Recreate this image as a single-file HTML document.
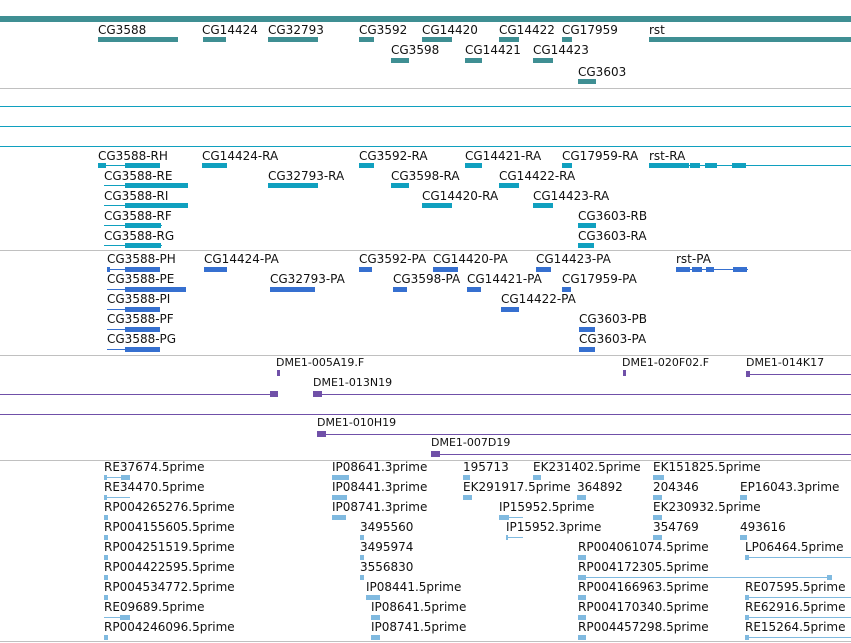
<!DOCTYPE html><html><head><style>
body{margin:0;width:851px;height:643px;background:#fff;position:relative;overflow:hidden;font-family:"DejaVu Sans","Liberation Sans",sans-serif;font-size:12px;color:#111}
.l{position:absolute;white-space:nowrap;line-height:14px}
.c{font-size:11px}
.b{position:absolute}
.h{position:absolute;left:0;width:851px;height:1px}
.t{background:#3f8f93}.r{background:#10a0bf}.p{background:#3670d0}.e{background:#80bae0}.d{background:#7050a8}
</style></head><body>
<div class="b t" style="left:0;top:16px;width:851px;height:6px"></div>
<div class="l" style="left:98px;top:23px">CG3588</div><div class="b t" style="left:98px;top:37px;width:80px;height:5px"></div>
<div class="l" style="left:202px;top:23px">CG14424</div><div class="b t" style="left:203px;top:37px;width:23px;height:5px"></div>
<div class="l" style="left:268px;top:23px">CG32793</div><div class="b t" style="left:268px;top:37px;width:50px;height:5px"></div>
<div class="l" style="left:359px;top:23px">CG3592</div><div class="b t" style="left:359px;top:37px;width:15px;height:5px"></div>
<div class="l" style="left:422px;top:23px">CG14420</div><div class="b t" style="left:422px;top:37px;width:30px;height:5px"></div>
<div class="l" style="left:499px;top:23px">CG14422</div><div class="b t" style="left:499px;top:37px;width:20px;height:5px"></div>
<div class="l" style="left:562px;top:23px">CG17959</div><div class="b t" style="left:562px;top:37px;width:10px;height:5px"></div>
<div class="l" style="left:649px;top:23px">rst</div><div class="b t" style="left:649px;top:37px;width:202px;height:5px"></div>
<div class="l" style="left:391px;top:43px">CG3598</div><div class="b t" style="left:391px;top:58px;width:18px;height:5px"></div>
<div class="l" style="left:465px;top:43px">CG14421</div><div class="b t" style="left:465px;top:58px;width:17px;height:5px"></div>
<div class="l" style="left:533px;top:43px">CG14423</div><div class="b t" style="left:533px;top:58px;width:20px;height:5px"></div>
<div class="l" style="left:578px;top:65px">CG3603</div><div class="b t" style="left:578px;top:79px;width:18px;height:5px"></div>
<div class="h" style="top:88px;background:#c0c0c0"></div>
<div class="h r" style="top:106px"></div><div class="h r" style="top:126px"></div><div class="h r" style="top:146px"></div>
<!-- transcripts -->
<div class="l" style="left:98px;top:149px">CG3588-RH</div><div class="b r" style="left:98px;top:165px;width:62px;height:1px"></div><div class="b r" style="left:98px;top:163px;width:8px;height:5px"></div><div class="b r" style="left:125px;top:163px;width:35px;height:5px"></div>
<div class="l" style="left:104px;top:169px">CG3588-RE</div><div class="b r" style="left:104px;top:185px;width:84px;height:1px"></div><div class="b r" style="left:125px;top:183px;width:63px;height:5px"></div>
<div class="l" style="left:104px;top:189px">CG3588-RI</div><div class="b r" style="left:104px;top:205px;width:84px;height:1px"></div><div class="b r" style="left:125px;top:203px;width:63px;height:5px"></div>
<div class="l" style="left:104px;top:209px">CG3588-RF</div><div class="b r" style="left:104px;top:225px;width:58px;height:1px"></div><div class="b r" style="left:125px;top:223px;width:36px;height:5px"></div>
<div class="l" style="left:104px;top:229px">CG3588-RG</div><div class="b r" style="left:104px;top:245px;width:58px;height:1px"></div><div class="b r" style="left:125px;top:243px;width:36px;height:5px"></div>
<div class="l" style="left:202px;top:149px">CG14424-RA</div><div class="b r" style="left:202px;top:163px;width:25px;height:5px"></div>
<div class="l" style="left:268px;top:169px">CG32793-RA</div><div class="b r" style="left:268px;top:183px;width:50px;height:5px"></div>
<div class="l" style="left:359px;top:149px">CG3592-RA</div><div class="b r" style="left:359px;top:163px;width:15px;height:5px"></div>
<div class="l" style="left:391px;top:169px">CG3598-RA</div><div class="b r" style="left:391px;top:183px;width:18px;height:5px"></div>
<div class="l" style="left:422px;top:189px">CG14420-RA</div><div class="b r" style="left:422px;top:203px;width:30px;height:5px"></div>
<div class="l" style="left:465px;top:149px">CG14421-RA</div><div class="b r" style="left:465px;top:163px;width:17px;height:5px"></div>
<div class="l" style="left:499px;top:169px">CG14422-RA</div><div class="b r" style="left:499px;top:183px;width:20px;height:5px"></div>
<div class="l" style="left:533px;top:189px">CG14423-RA</div><div class="b r" style="left:533px;top:203px;width:20px;height:5px"></div>
<div class="l" style="left:562px;top:149px">CG17959-RA</div><div class="b r" style="left:562px;top:163px;width:10px;height:5px"></div>
<div class="l" style="left:649px;top:149px">rst-RA</div><div class="b r" style="left:649px;top:165px;width:202px;height:1px"></div><div class="b r" style="left:649px;top:163px;width:40px;height:5px"></div><div class="b r" style="left:690px;top:163px;width:10px;height:5px"></div><div class="b r" style="left:705px;top:163px;width:12px;height:5px"></div><div class="b r" style="left:732px;top:163px;width:14px;height:5px"></div>
<div class="l" style="left:578px;top:209px">CG3603-RB</div><div class="b r" style="left:578px;top:223px;width:18px;height:5px"></div>
<div class="l" style="left:578px;top:229px">CG3603-RA</div><div class="b r" style="left:578px;top:243px;width:16px;height:5px"></div>
<div class="h" style="top:250px;background:#c0c0c0"></div>
<!-- proteins -->
<div class="l" style="left:107px;top:252px">CG3588-PH</div><div class="b p" style="left:107px;top:269px;width:53px;height:1px"></div><div class="b p" style="left:125px;top:267px;width:35px;height:5px"></div><div class="b p" style="left:107px;top:267px;width:3px;height:5px"></div>
<div class="l" style="left:107px;top:272px">CG3588-PE</div><div class="b p" style="left:107px;top:289px;width:79px;height:1px"></div><div class="b p" style="left:125px;top:287px;width:61px;height:5px"></div>
<div class="l" style="left:107px;top:292px">CG3588-PI</div><div class="b p" style="left:107px;top:309px;width:53px;height:1px"></div><div class="b p" style="left:125px;top:307px;width:35px;height:5px"></div>
<div class="l" style="left:107px;top:312px">CG3588-PF</div><div class="b p" style="left:107px;top:329px;width:53px;height:1px"></div><div class="b p" style="left:125px;top:327px;width:35px;height:5px"></div>
<div class="l" style="left:107px;top:332px">CG3588-PG</div><div class="b p" style="left:107px;top:349px;width:53px;height:1px"></div><div class="b p" style="left:125px;top:347px;width:35px;height:5px"></div>
<div class="l" style="left:204px;top:252px">CG14424-PA</div><div class="b p" style="left:204px;top:267px;width:23px;height:5px"></div>
<div class="l" style="left:270px;top:272px">CG32793-PA</div><div class="b p" style="left:270px;top:287px;width:45px;height:5px"></div>
<div class="l" style="left:359px;top:252px">CG3592-PA</div><div class="b p" style="left:359px;top:267px;width:13px;height:5px"></div>
<div class="l" style="left:433px;top:252px">CG14420-PA</div><div class="b p" style="left:433px;top:267px;width:25px;height:5px"></div>
<div class="l" style="left:536px;top:252px">CG14423-PA</div><div class="b p" style="left:536px;top:267px;width:15px;height:5px"></div>
<div class="l" style="left:393px;top:272px">CG3598-PA</div><div class="b p" style="left:393px;top:287px;width:14px;height:5px"></div>
<div class="l" style="left:467px;top:272px">CG14421-PA</div><div class="b p" style="left:467px;top:287px;width:14px;height:5px"></div>
<div class="l" style="left:562px;top:272px">CG17959-PA</div><div class="b p" style="left:562px;top:287px;width:9px;height:5px"></div>
<div class="l" style="left:501px;top:292px">CG14422-PA</div><div class="b p" style="left:501px;top:307px;width:18px;height:5px"></div>
<div class="l" style="left:676px;top:252px">rst-PA</div><div class="b p" style="left:676px;top:269px;width:72px;height:1px"></div><div class="b p" style="left:676px;top:267px;width:14px;height:5px"></div><div class="b p" style="left:692px;top:267px;width:10px;height:5px"></div><div class="b p" style="left:706px;top:267px;width:8px;height:5px"></div><div class="b p" style="left:733px;top:267px;width:14px;height:5px"></div>
<div class="l" style="left:579px;top:312px">CG3603-PB</div><div class="b p" style="left:579px;top:327px;width:16px;height:5px"></div>
<div class="l" style="left:579px;top:332px">CG3603-PA</div><div class="b p" style="left:579px;top:347px;width:16px;height:5px"></div>
<div class="h" style="top:355px;background:#c0c0c0"></div>
<!-- clones -->
<div class="l c" style="left:276px;top:356px">DME1-005A19.F</div><div class="b d" style="left:277px;top:370px;width:3px;height:6px"></div>
<div class="l c" style="left:622px;top:356px">DME1-020F02.F</div><div class="b d" style="left:623px;top:370px;width:3px;height:6px"></div>
<div class="l c" style="left:746px;top:356px">DME1-014K17</div><div class="b d" style="left:746px;top:374px;width:105px;height:1px"></div><div class="b d" style="left:746px;top:371px;width:4px;height:6px"></div>
<div class="l c" style="left:313px;top:376px">DME1-013N19</div>
<div class="b d" style="left:0;top:394px;width:278px;height:1px"></div><div class="b d" style="left:270px;top:391px;width:8px;height:6px"></div>
<div class="b d" style="left:313px;top:394px;width:538px;height:1px"></div><div class="b d" style="left:313px;top:391px;width:9px;height:6px"></div>
<div class="b d" style="left:0;top:414px;width:851px;height:1px"></div>
<div class="l c" style="left:317px;top:416px">DME1-010H19</div><div class="b d" style="left:317px;top:434px;width:534px;height:1px"></div><div class="b d" style="left:317px;top:431px;width:9px;height:6px"></div>
<div class="l c" style="left:431px;top:436px">DME1-007D19</div><div class="b d" style="left:431px;top:454px;width:420px;height:1px"></div><div class="b d" style="left:431px;top:451px;width:9px;height:6px"></div>
<div class="h" style="top:460px;background:#c0c0c0"></div>
<!-- ESTs -->
<div class="l" style="left:104px;top:460px">RE37674.5prime</div><div class="b e" style="left:104px;top:477px;width:26px;height:1px"></div><div class="b e" style="left:121px;top:475px;width:9px;height:5px"></div><div class="b e" style="left:104px;top:475px;width:3px;height:5px"></div>
<div class="l" style="left:104px;top:480px">RE34470.5prime</div><div class="b e" style="left:104px;top:497px;width:26px;height:1px"></div><div class="b e" style="left:104px;top:495px;width:3px;height:5px"></div>
<div class="l" style="left:104px;top:500px">RP004265276.5prime</div><div class="b e" style="left:104px;top:515px;width:4px;height:5px"></div>
<div class="l" style="left:104px;top:520px">RP004155605.5prime</div><div class="b e" style="left:104px;top:535px;width:4px;height:5px"></div>
<div class="l" style="left:104px;top:540px">RP004251519.5prime</div><div class="b e" style="left:104px;top:555px;width:4px;height:5px"></div>
<div class="l" style="left:104px;top:560px">RP004422595.5prime</div><div class="b e" style="left:104px;top:575px;width:4px;height:5px"></div>
<div class="l" style="left:104px;top:580px">RP004534772.5prime</div><div class="b e" style="left:104px;top:595px;width:4px;height:5px"></div>
<div class="l" style="left:104px;top:600px">RE09689.5prime</div><div class="b e" style="left:104px;top:617px;width:26px;height:1px"></div><div class="b e" style="left:120px;top:615px;width:10px;height:5px"></div>
<div class="l" style="left:104px;top:620px">RP004246096.5prime</div><div class="b e" style="left:104px;top:635px;width:4px;height:5px"></div>
<div class="l" style="left:332px;top:460px">IP08641.3prime</div><div class="b e" style="left:332px;top:475px;width:17px;height:5px"></div>
<div class="l" style="left:332px;top:480px">IP08441.3prime</div><div class="b e" style="left:332px;top:495px;width:15px;height:5px"></div>
<div class="l" style="left:332px;top:500px">IP08741.3prime</div><div class="b e" style="left:332px;top:515px;width:14px;height:5px"></div>
<div class="l" style="left:360px;top:520px">3495560</div><div class="b e" style="left:360px;top:535px;width:4px;height:5px"></div>
<div class="l" style="left:360px;top:540px">3495974</div><div class="b e" style="left:360px;top:555px;width:4px;height:5px"></div>
<div class="l" style="left:360px;top:560px">3556830</div><div class="b e" style="left:360px;top:575px;width:4px;height:5px"></div>
<div class="l" style="left:366px;top:580px">IP08441.5prime</div><div class="b e" style="left:366px;top:595px;width:14px;height:5px"></div>
<div class="l" style="left:371px;top:600px">IP08641.5prime</div><div class="b e" style="left:371px;top:615px;width:9px;height:5px"></div>
<div class="l" style="left:371px;top:620px">IP08741.5prime</div><div class="b e" style="left:371px;top:635px;width:9px;height:5px"></div>
<div class="l" style="left:463px;top:460px">195713</div><div class="b e" style="left:463px;top:475px;width:7px;height:5px"></div>
<div class="l" style="left:533px;top:460px">EK231402.5prime</div><div class="b e" style="left:533px;top:475px;width:8px;height:5px"></div>
<div class="l" style="left:463px;top:480px">EK291917.5prime</div><div class="b e" style="left:463px;top:495px;width:9px;height:5px"></div>
<div class="l" style="left:577px;top:480px">364892</div><div class="b e" style="left:577px;top:495px;width:9px;height:5px"></div>
<div class="l" style="left:499px;top:500px">IP15952.5prime</div><div class="b e" style="left:499px;top:517px;width:24px;height:1px"></div><div class="b e" style="left:499px;top:515px;width:10px;height:5px"></div>
<div class="l" style="left:506px;top:520px">IP15952.3prime</div><div class="b e" style="left:506px;top:537px;width:17px;height:1px"></div><div class="b e" style="left:506px;top:535px;width:2px;height:5px"></div>
<div class="l" style="left:653px;top:460px">EK151825.5prime</div><div class="b e" style="left:653px;top:475px;width:11px;height:5px"></div>
<div class="l" style="left:653px;top:480px">204346</div><div class="b e" style="left:653px;top:495px;width:9px;height:5px"></div>
<div class="l" style="left:653px;top:500px">EK230932.5prime</div><div class="b e" style="left:653px;top:515px;width:9px;height:5px"></div>
<div class="l" style="left:653px;top:520px">354769</div><div class="b e" style="left:653px;top:535px;width:9px;height:5px"></div>
<div class="l" style="left:740px;top:480px">EP16043.3prime</div><div class="b e" style="left:740px;top:495px;width:7px;height:5px"></div>
<div class="l" style="left:740px;top:520px">493616</div><div class="b e" style="left:740px;top:535px;width:7px;height:5px"></div>
<div class="l" style="left:745px;top:540px">LP06464.5prime</div><div class="b e" style="left:745px;top:557px;width:106px;height:1px"></div><div class="b e" style="left:745px;top:555px;width:4px;height:5px"></div>
<div class="l" style="left:578px;top:540px">RP004061074.5prime</div><div class="b e" style="left:578px;top:555px;width:8px;height:5px"></div>
<div class="l" style="left:578px;top:560px">RP004172305.5prime</div><div class="b e" style="left:578px;top:577px;width:254px;height:1px"></div><div class="b e" style="left:578px;top:575px;width:8px;height:5px"></div><div class="b e" style="left:827px;top:575px;width:5px;height:5px"></div>
<div class="l" style="left:578px;top:580px">RP004166963.5prime</div><div class="b e" style="left:578px;top:595px;width:8px;height:5px"></div>
<div class="l" style="left:578px;top:600px">RP004170340.5prime</div><div class="b e" style="left:578px;top:615px;width:8px;height:5px"></div>
<div class="l" style="left:578px;top:620px">RP004457298.5prime</div><div class="b e" style="left:578px;top:635px;width:8px;height:5px"></div>
<div class="l" style="left:745px;top:580px">RE07595.5prime</div><div class="b e" style="left:745px;top:597px;width:106px;height:1px"></div><div class="b e" style="left:745px;top:595px;width:4px;height:5px"></div>
<div class="l" style="left:745px;top:600px">RE62916.5prime</div><div class="b e" style="left:745px;top:617px;width:106px;height:1px"></div><div class="b e" style="left:745px;top:615px;width:4px;height:5px"></div>
<div class="l" style="left:745px;top:620px">RE15264.5prime</div><div class="b e" style="left:745px;top:637px;width:106px;height:1px"></div><div class="b e" style="left:745px;top:635px;width:4px;height:5px"></div>
<div class="h" style="top:641px;background:#c0c0c0"></div>
</body></html>
